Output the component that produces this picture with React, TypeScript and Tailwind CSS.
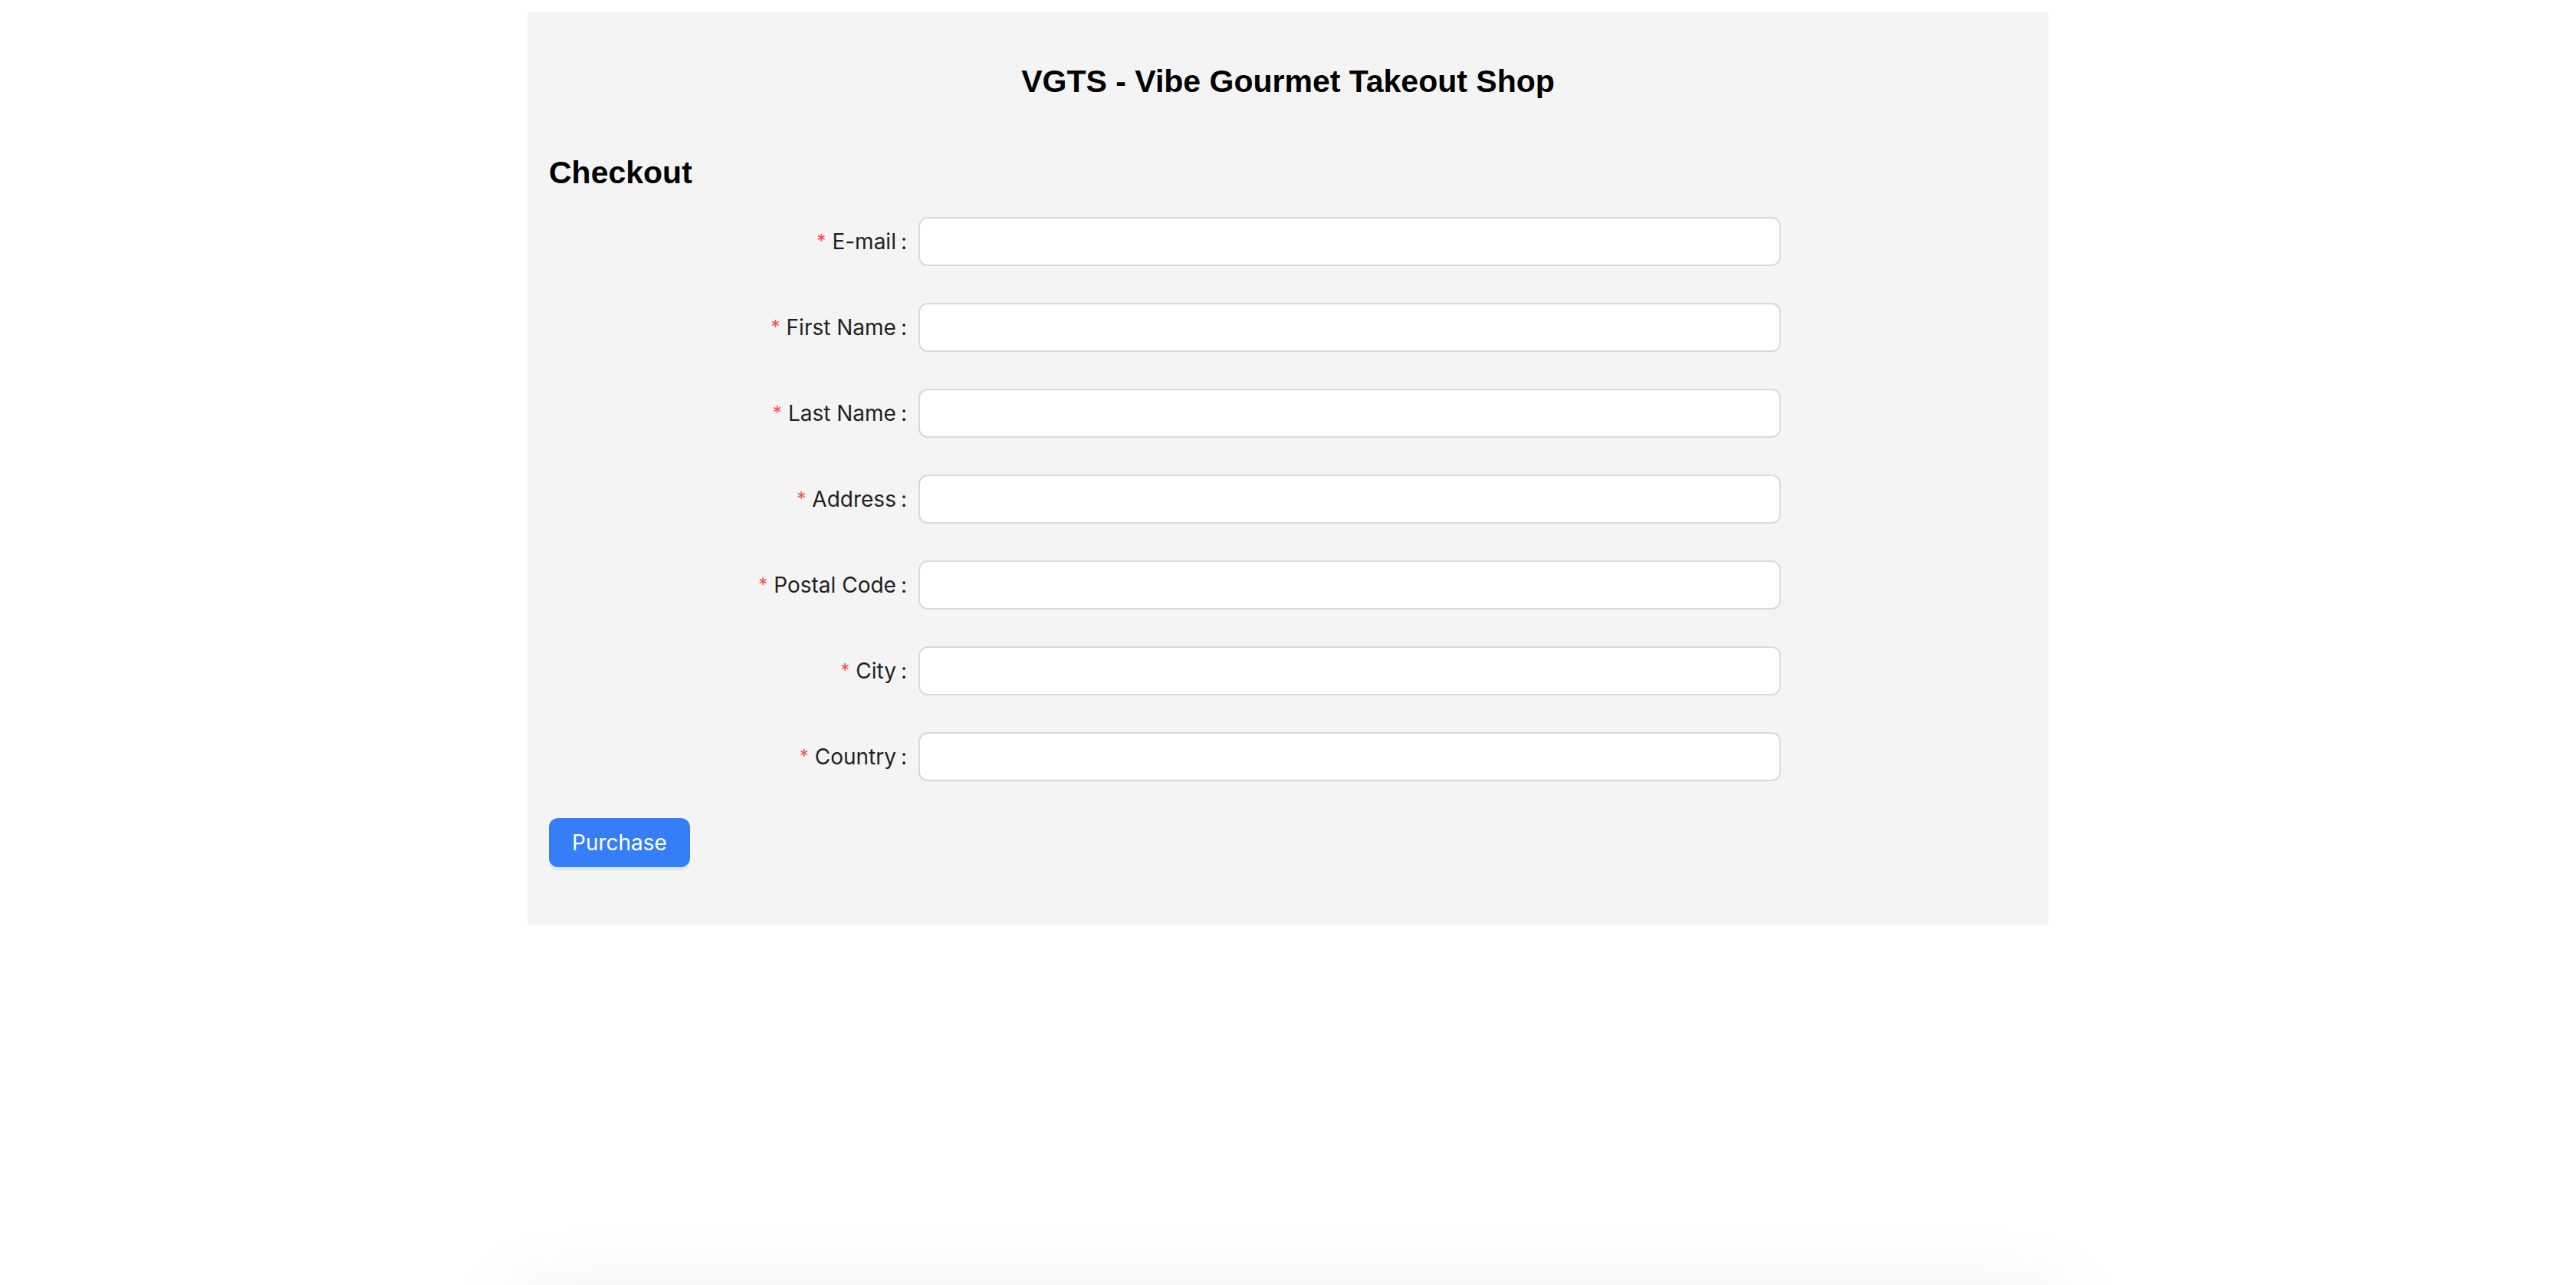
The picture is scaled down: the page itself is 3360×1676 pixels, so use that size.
import React from 'react';

const fields = ['E-mail', 'First Name', 'Last Name', 'Address', 'Postal Code', 'City', 'Country'];

function FormRow({ label }: { label: string }) {
  return (
    <div className="mb-[48px] flex items-center">
      {/* label column: 6/24 */}
      <div className="flex h-[64px] w-[25%] items-center justify-end text-[28px] text-[#1f1f1f]">
        <span className="mr-[8px] text-[24px] leading-none text-[#ff4d4f]">*</span>
        <span>{label}</span>
        <span className="ml-[6px] mr-[15px]">:</span>
      </div>
      {/* wrapper column: 14/24 */}
      <div className="w-[58.3333%]">
        <input
          type="text"
          className="h-[64px] w-full rounded-[12px] border-2 border-[#d9d9d9] bg-white px-[22px] text-[28px] outline-none"
        />
      </div>
    </div>
  );
}

export default function App() {
  return (
    <div className="min-h-screen bg-white pt-[16px] font-['Inter','Noto_Sans',sans-serif]">
      <div className="mx-auto w-[1984px] bg-[#f4f4f4] p-[28px]">
        <h1 className="mt-[30px] text-center font-['Liberation_Sans',Arial,sans-serif] text-[41px] font-bold leading-[64px] text-black">
          VGTS - Vibe Gourmet Takeout Shop
        </h1>
        <h2 className="mt-[55px] font-['Liberation_Sans',Arial,sans-serif] text-[41px] font-bold leading-[64px] text-black">
          Checkout
        </h2>

        <form className="mt-[26px]" onSubmit={(e) => e.preventDefault()}>
          {fields.map((f) => (
            <FormRow key={f} label={f} />
          ))}
          <div className="mb-[48px]">
            <button
              type="submit"
              className="h-[64px] w-[184px] rounded-[12px] bg-[#367ef7] text-center text-[28px] text-white shadow-[0_4px_0_rgba(5,145,255,0.1)]"
            >
              Purchase
            </button>
          </div>
        </form>
      </div>

      {/* element just below the viewport, only its shadow shows */}
      <div className="fixed left-[660px] right-[660px] top-full h-[200px] bg-white shadow-[0_0_100px_rgba(0,0,0,0.06)]" />
    </div>
  );
}
